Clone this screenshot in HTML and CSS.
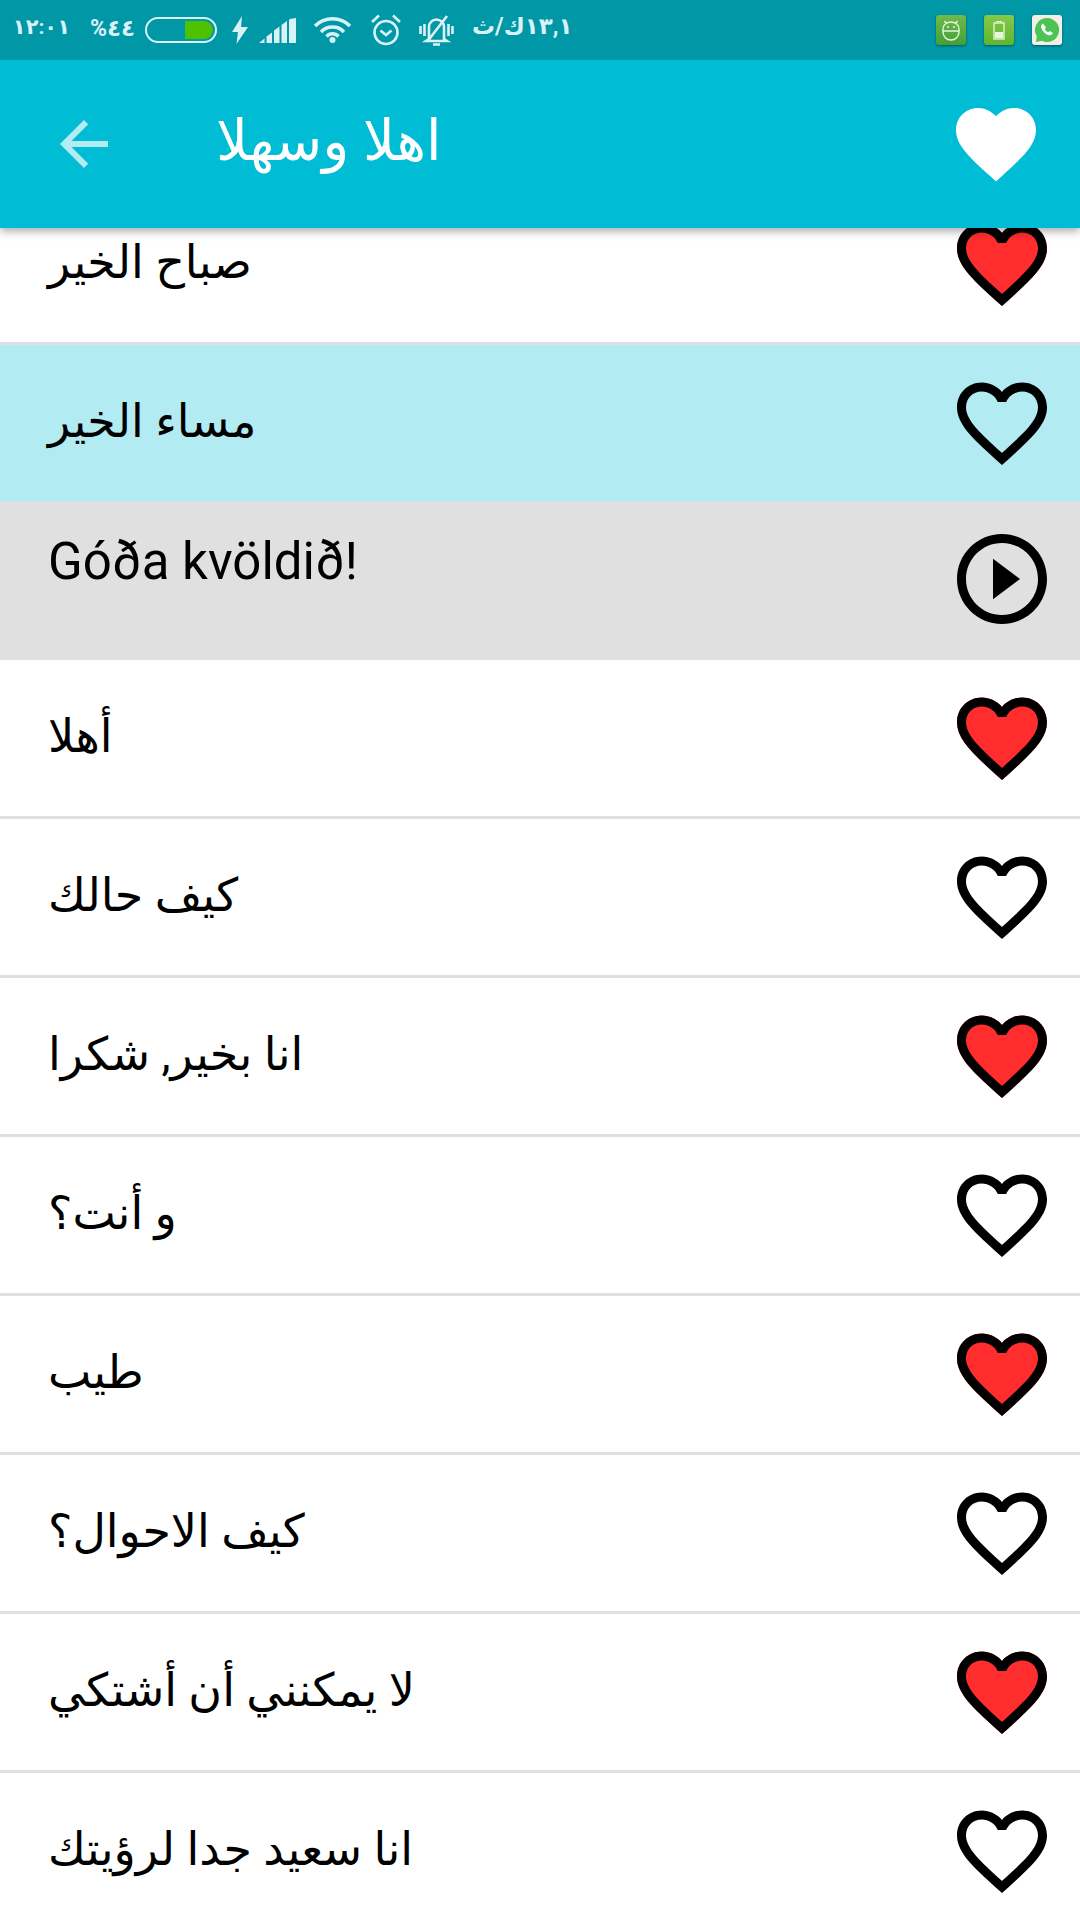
FILE: index.html
```html
<!DOCTYPE html>
<html lang="ar">
<head>
    <meta charset="UTF-8">
    <meta name="viewport" content="width=device-width, initial-scale=1.0">
    <title>اهلا وسهلا</title>
    <link rel="stylesheet" href="styles.css">
</head>
<body>
    <svg class="defs" width="0" height="0">
        <defs>
            <path id="heart-fill" d="M12 21.35l-1.45-1.32C5.4 15.36 2 12.28 2 8.5 2 5.42 4.42 3 7.5 3c1.74 0 3.41.81 4.5 2.09C13.09 3.81 14.76 3 16.5 3 19.58 3 22 5.42 22 8.5c0 3.78-3.4 6.86-8.55 11.54L12 21.35z"/>
            <path id="heart-line" d="M16.5 3c-1.74 0-3.41.81-4.5 2.09C10.91 3.81 9.24 3 7.5 3 4.42 3 2 5.42 2 8.5c0 3.78 3.4 6.86 8.55 11.54L12 21.35l1.45-1.32C18.6 15.36 22 12.28 22 8.5 22 5.42 19.58 3 16.5 3zm-4.4 15.55l-.1.1-.1-.1C7.14 14.24 4 11.39 4 8.5 4 6.5 5.5 5 7.5 5c1.54 0 3.04.99 3.57 2.36h1.87C13.46 5.99 14.96 5 16.5 5c2 0 3.5 1.5 3.5 3.5 0 2.89-3.14 5.74-7.9 10.05z"/>
            <linearGradient id="green-a" x1="0" y1="0" x2="0" y2="1"><stop offset="0" stop-color="#6fba4e"/><stop offset="1" stop-color="#43a036"/></linearGradient>
            <linearGradient id="green-b" x1="0" y1="0" x2="0" y2="1"><stop offset="0" stop-color="#86c84a"/><stop offset="1" stop-color="#5fb52e"/></linearGradient>
        </defs>
    </svg>

    <div class="status-bar">
        <span class="clock" dir="rtl">١٢:٠١</span>
        <span class="percent">%٤٤</span>
        <div class="battery"><div class="battery-level"></div></div>
        <svg class="st-bolt" viewBox="0 0 16 28"><path d="M10 0L0 16h6L4.500 28 16 11H9z"/></svg>
        <svg class="st-signal" viewBox="0 0 37 25"><path d="M0 25l5.500-4.500V25zM7.500 25v-6.500l5.500-4V25zM15 25V12.500l5.500-4V25zM22.500 25V7l5.500-4v22zM30 25V2.500Q30 1.500 31 1l6-1v25z"/></svg>
        <svg class="st-wifi" viewBox="0 0 39 26"><path d="M2 9a25 25 0 0 1 35 0M8 15a16 16 0 0 1 23 0M13.500 19.500a8 8 0 0 1 12 0"/><circle class="st-dot" cx="19.500" cy="23" r="3"/></svg>
        <svg class="st-alarm" viewBox="0 0 32 32"><circle cx="16" cy="18.500" r="11.500"/><path d="M10.500 16.500l5.500 4.500 5.500-4.500M2 8l7-6.500M30 8l-7-6.500"/></svg>
        <svg class="st-mute" viewBox="0 0 35 32"><path d="M10 25V13a7.500 7.500 0 0 1 15 0v12l3 2H7zM14 30.500h7M28 2L8 28M1.500 12v8M5.500 10v12M33.500 12v8M29.500 10v12"/></svg>
        <span class="speed" dir="rtl">١٣,١ك/ث</span>
        <div class="notifs">
            <svg class="notif" viewBox="0 0 30 30">
                <rect width="30" height="30" rx="3" fill="url(#green-a)"/>
                <g fill="none" stroke="#e4f5d8" stroke-width="1.400"><path d="M7 14a8 7 0 0 1 16 0v3a8 8 0 0 1-16 0zM7 16h16M10 8L8.500 6M20 8l1.500-2"/></g>
                <circle cx="12" cy="12" r="1" fill="#e4f5d8"/><circle cx="18" cy="12" r="1" fill="#e4f5d8"/>
            </svg>
            <svg class="notif" viewBox="0 0 30 30">
                <rect width="30" height="30" rx="3" fill="url(#green-b)"/>
                <rect x="10" y="8" width="10" height="16" fill="none" stroke="#eaf7dd" stroke-width="1.300"/>
                <rect x="12" y="6" width="6" height="1" fill="#eaf7dd"/>
                <rect x="11" y="17" width="8" height="6" fill="#eaf7dd"/>
            </svg>
            <svg class="notif" viewBox="0 0 30 30">
                <rect width="30" height="30" rx="3" fill="#f3eee6"/>
                <path d="M15 3a12 12 0 0 0-10.200 18.300L4 27l5.900-1.200A12 12 0 1 0 15 3z" fill="#4cc355"/>
                <path d="M11 8.500c-1.500.6-2.500 2.500-1.500 5 1.200 3 3.700 5.500 6.500 6.500 2.500.8 4.300-.4 4.800-2l-3-2-1.500 1.300c-1.500-.7-2.800-2-3.500-3.600l1.200-1.300z" fill="#fff"/>
            </svg>
        </div>
    </div>

    <header class="app-bar">
        <svg class="back" viewBox="0 0 24 24"><path d="M20 11H7.830l5.590-5.590L12 4l-8 8 8 8 1.410-1.410L7.830 13H20v-2z"/></svg>
        <h1 class="title" dir="rtl">اهلا وسهلا</h1>
        <svg class="fav-all" viewBox="0 0 24 24"><use href="#heart-fill"/></svg>
    </header>

    <main class="list">
        <div class="row">
            <span class="phrase" dir="rtl">صباح الخير</span>
            <svg class="icon" viewBox="0 0 24 24"><use class="red" href="#heart-fill"/><use href="#heart-line"/></svg>
        </div>
        <div class="row selected">
            <span class="phrase" dir="rtl">مساء الخير</span>
            <svg class="icon" viewBox="0 0 24 24"><use href="#heart-line"/></svg>
        </div>
        <div class="row translation">
            <span class="phrase latin">Góða kvöldið!</span>
            <svg class="icon" viewBox="0 0 24 24"><path d="M10 16.500l6-4.500-6-4.500v9zM12 2C6.480 2 2 6.480 2 12s4.480 10 10 10 10-4.480 10-10S17.520 2 12 2zm0 18c-4.410 0-8-3.590-8-8s3.590-8 8-8 8 3.590 8 8-3.590 8-8 8z"/></svg>
        </div>
        <div class="row">
            <span class="phrase" dir="rtl">أهلا</span>
            <svg class="icon" viewBox="0 0 24 24"><use class="red" href="#heart-fill"/><use href="#heart-line"/></svg>
        </div>
        <div class="row">
            <span class="phrase" dir="rtl">كيف حالك</span>
            <svg class="icon" viewBox="0 0 24 24"><use href="#heart-line"/></svg>
        </div>
        <div class="row">
            <span class="phrase" dir="rtl">انا بخير, شكرا</span>
            <svg class="icon" viewBox="0 0 24 24"><use class="red" href="#heart-fill"/><use href="#heart-line"/></svg>
        </div>
        <div class="row">
            <span class="phrase" dir="rtl">و أنت؟</span>
            <svg class="icon" viewBox="0 0 24 24"><use href="#heart-line"/></svg>
        </div>
        <div class="row">
            <span class="phrase" dir="rtl">طيب</span>
            <svg class="icon" viewBox="0 0 24 24"><use class="red" href="#heart-fill"/><use href="#heart-line"/></svg>
        </div>
        <div class="row">
            <span class="phrase" dir="rtl">كيف الاحوال؟</span>
            <svg class="icon" viewBox="0 0 24 24"><use href="#heart-line"/></svg>
        </div>
        <div class="row">
            <span class="phrase" dir="rtl">لا يمكنني أن أشتكي</span>
            <svg class="icon" viewBox="0 0 24 24"><use class="red" href="#heart-fill"/><use href="#heart-line"/></svg>
        </div>
        <div class="row">
            <span class="phrase" dir="rtl">انا سعيد جدا لرؤيتك</span>
            <svg class="icon" viewBox="0 0 24 24"><use href="#heart-line"/></svg>
        </div>
    </main>
</body>
</html>
```

FILE: styles.css
```css
body {
    margin: 0;
    height: 1920px;
    overflow: hidden;
    background: #ffffff;
    color: #000000;
    font-family: Roboto, "DejaVu Sans", sans-serif;
}

.defs {
    display: block;
    height: 0;
}

/* status bar */
.status-bar {
    position: relative;
    z-index: 2;
    display: flex;
    align-items: center;
    height: 60px;
    padding: 0 18px 0 20px;
    background: #0097a7;
    color: #d9f2f6;
    font-size: 23px;
    font-weight: 700;
}

.status-bar svg {
    flex: none;
    fill: #d9f2f6;
}

.clock {
    width: 50px;
    margin-top: -7px;
    font-size: 21px;
}

.percent {
    width: 44px;
    margin-left: 20px;
    margin-top: -3px;
}

.battery {
    display: flex;
    justify-content: flex-end;
    box-sizing: border-box;
    width: 72px;
    height: 26px;
    margin-left: 11px;
    padding: 2px;
    border: 2px solid #d9f2f6;
    border-radius: 13px;
}

.battery-level {
    width: 28px;
    background: #4cc200;
    border-radius: 0 9px 9px 0;
}

.st-bolt {
    width: 16px;
    height: 28px;
    margin-left: 15px;
}

.st-signal {
    width: 37px;
    height: 25px;
    margin-left: 11px;
}

.status-bar .st-wifi,
.status-bar .st-alarm,
.status-bar .st-mute {
    fill: none;
    stroke: #d9f2f6;
    stroke-width: 2.6;
}

.st-wifi {
    width: 39px;
    height: 26px;
    margin-left: 17px;
}

.status-bar .st-dot {
    fill: #d9f2f6;
    stroke: none;
}

.st-wifi path {
    stroke-width: 3.5;
}

.st-alarm {
    width: 32px;
    height: 32px;
    margin-left: 18px;
}

.st-mute {
    width: 35px;
    height: 32px;
    margin-left: 17px;
}

.speed {
    margin-left: 18px;
    margin-top: -7px;
}

.notifs {
    display: flex;
    gap: 18px;
    margin-left: auto;
}

.notif {
    width: 30px;
    height: 30px;
    filter: drop-shadow(0 1px 1px rgba(0, 0, 0, 0.4));
}

/* app bar */
.app-bar {
    position: relative;
    z-index: 1;
    display: flex;
    align-items: center;
    height: 168px;
    padding: 0 36px 0 48px;
    background: #00bcd4;
    box-shadow: 0 3px 9px rgba(0, 0, 0, 0.35);
}

.back {
    width: 72px;
    height: 72px;
    fill: #b2ebf2;
}

.title {
    margin: 0 0 6px 96px;
    color: #ffffff;
    font-size: 56px;
    font-weight: 400;
}

.fav-all {
    width: 96px;
    height: 96px;
    margin-left: auto;
    fill: #ffffff;
}

/* phrase list */
.list {
    margin-top: -42px;
}

.row {
    display: flex;
    align-items: center;
    justify-content: space-between;
    box-sizing: border-box;
    height: 159px;
    padding: 0 24px 0 48px;
    border-bottom: 3px solid #e0e0e0;
}

.selected {
    background: #b2ebf2;
}

.translation {
    align-items: flex-start;
    margin-top: -3px;
    padding-top: 24px;
    background: #e0e0e0;
    border-bottom: 0;
}

.phrase {
    font-size: 46px;
    padding-bottom: 5px;
}

.latin {
    font-size: 51px;
    line-height: 74px;
    padding-bottom: 0;
}

.icon {
    flex: none;
    width: 108px;
    height: 108px;
}

.red {
    fill: #ff2d2d;
}
```
